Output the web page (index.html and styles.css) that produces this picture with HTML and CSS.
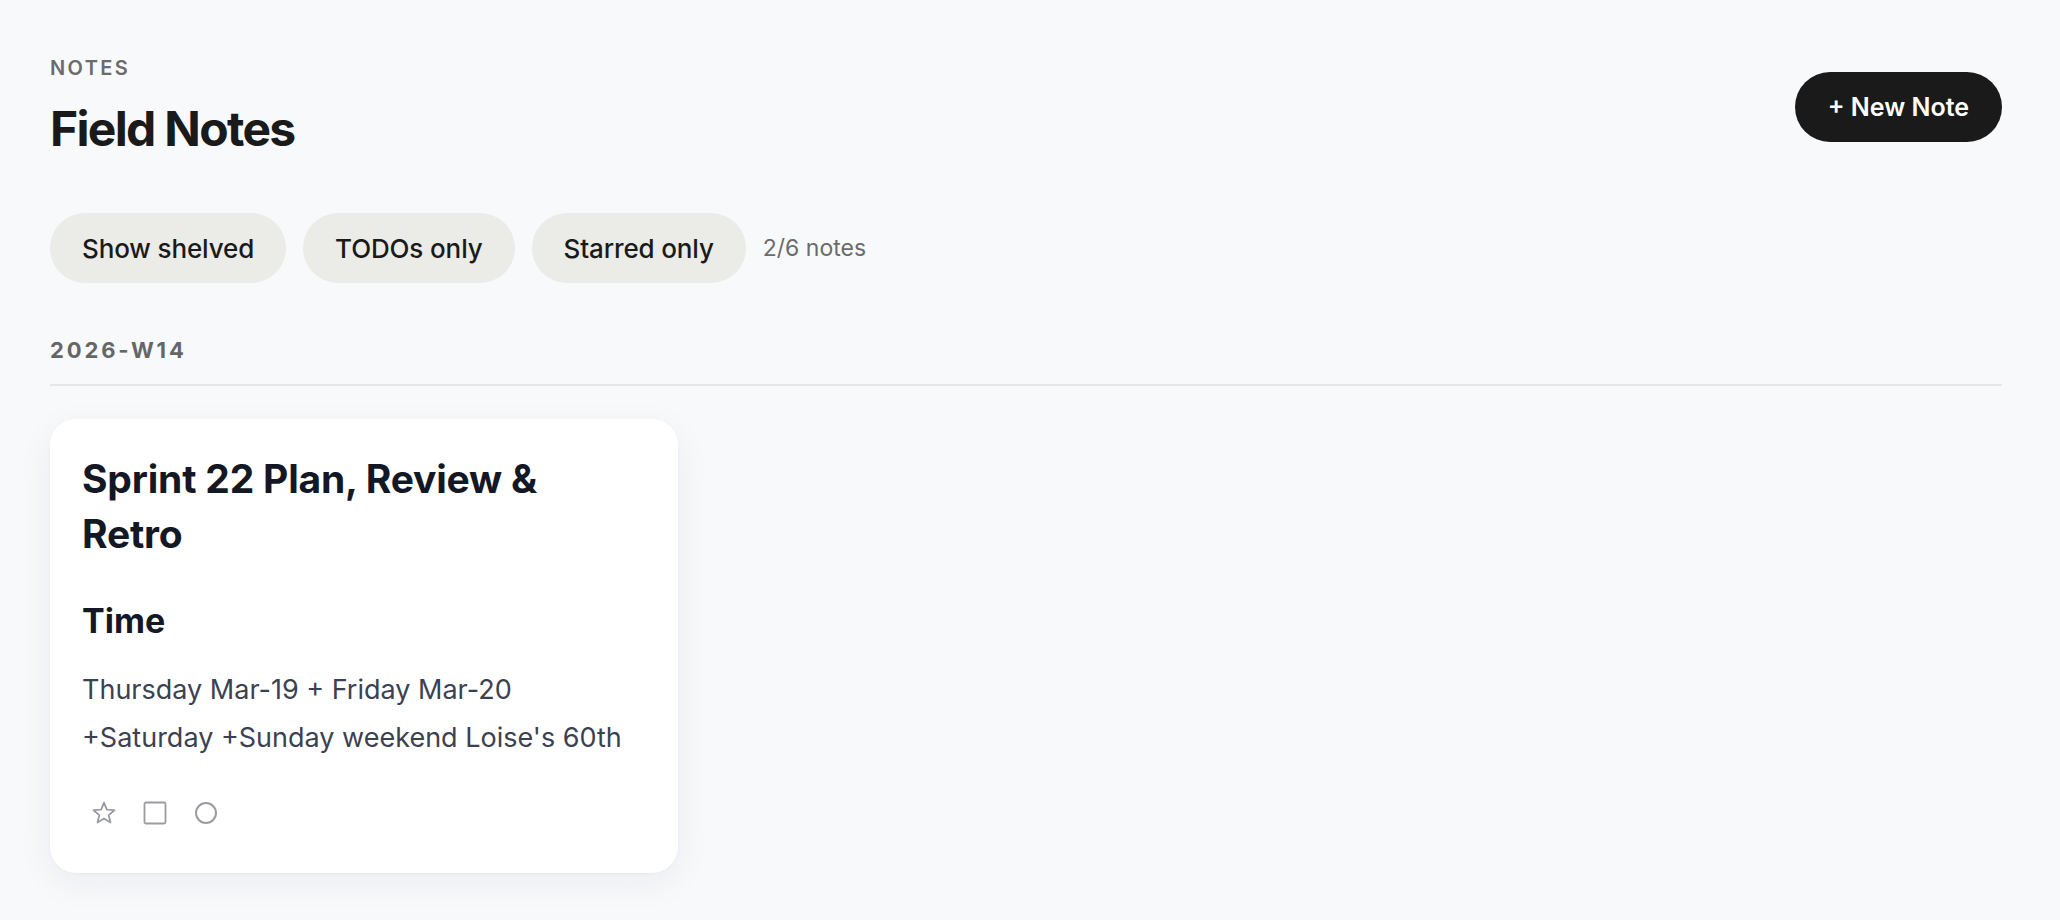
FILE: index.html
```html
<!DOCTYPE html>
<html lang="en">
<head>
<meta charset="utf-8">
<title>Field Notes</title>
<link rel="stylesheet" href="styles.css">
</head>
<body>
<main class="page">
  <header class="page-header">
    <div class="heading">
      <div class="eyebrow">NOTES</div>
      <h1 class="title">Field Notes</h1>
    </div>
    <button class="new-btn">+ New Note</button>
  </header>

  <div class="filters">
    <button class="pill">Show shelved</button>
    <button class="pill">TODOs only</button>
    <button class="pill">Starred only</button>
    <span class="count">2/6 notes</span>
  </div>

  <section class="week">
    <h2 class="week-label">2026-W14</h2>
    <div class="cards">
      <article class="card">
        <h3 class="card-title">Sprint 22 Plan, Review &amp; Retro</h3>
        <h4 class="card-sub">Time</h4>
        <p class="card-body">Thursday Mar-19 + Friday Mar-20<br>+Saturday +Sunday weekend Loise's 60th</p>
        <div class="card-actions">
          <span class="icon" aria-label="Star">
            <svg width="24" height="24" viewBox="0 0 24 24" fill="none" stroke="currentColor" stroke-width="1.8" stroke-linejoin="round"><path d="M12 1.6L14.88 8.64L22.46 9.2L16.66 14.11L18.47 21.5L12 17.5L5.53 21.5L7.34 14.11L1.54 9.2L9.12 8.64Z"/></svg>
          </span>
          <span class="icon" aria-label="Todo">
            <svg width="24" height="24" viewBox="0 0 24 24" fill="none" stroke="currentColor" stroke-width="1.8"><rect x="1.5" y="1.5" width="21" height="21" rx="1.5"/></svg>
          </span>
          <span class="icon" aria-label="Status">
            <svg width="24" height="24" viewBox="0 0 24 24" fill="none" stroke="currentColor" stroke-width="2"><circle cx="12" cy="12" r="10"/></svg>
          </span>
        </div>
      </article>
    </div>
  </section>
</main>
</body>
</html>
```

FILE: styles.css
```css
* { box-sizing: border-box; }

html, body {
  margin: 0;
  padding: 0;
  background: #f8f9fb;
  font-family: Inter, "Noto Sans", "Liberation Sans", sans-serif;
  color: #1a1a1a;
}

.page {
  padding: 56px 58px 40px 50px;
}

.page-header {
  display: flex;
  justify-content: space-between;
  align-items: center;
}

.eyebrow {
  font-size: 20px;
  line-height: 24px;
  font-weight: 600;
  letter-spacing: 0.12em;
  color: #6b6b6b;
}

.title {
  margin: 20px 0 0;
  font-size: 48px;
  line-height: 58px;
  font-weight: 700;
  letter-spacing: -0.035em;
  color: #1a1a1a;
}

.new-btn {
  height: 70px;
  padding: 0 33px;
  border: none;
  border-radius: 35px;
  background: #1a1a1a;
  color: #ffffff;
  font-family: inherit;
  font-size: 25px;
  font-weight: 600;
}

.filters {
  display: flex;
  align-items: center;
  gap: 17px;
  margin-top: 55px;
}

.pill {
  height: 70px;
  padding: 0 32px;
  border: none;
  border-radius: 35px;
  background: #ebebe7;
  color: #1a1a1a;
  font-family: inherit;
  font-size: 26px;
  font-weight: 500;
  letter-spacing: -0.005em;
}

.count {
  font-size: 23px;
  color: #6b6b6b;
}

.week {
  margin-top: 54px;
}

.week-label {
  margin: 0;
  padding-bottom: 21px;
  border-bottom: 2px solid #e6e6e6;
  font-size: 22px;
  line-height: 26px;
  font-weight: 700;
  letter-spacing: 0.13em;
  color: #666666;
}

.cards {
  display: flex;
  margin-top: 33px;
}

.card {
  width: 628px;
  padding: 32px 32px 42px;
  background: #ffffff;
  border-radius: 26px;
  box-shadow: 0 10px 36px rgba(20, 30, 50, 0.06), 0 1px 3px rgba(20, 30, 50, 0.03);
}

.card-title {
  margin: 0;
  max-width: 500px;
  font-size: 39px;
  line-height: 55px;
  font-weight: 700;
  letter-spacing: -0.005em;
  color: #141824;
}

.card-sub {
  margin: 38px 0 0;
  font-size: 34px;
  line-height: 44px;
  font-weight: 700;
  color: #141824;
}

.card-body {
  margin: 23px 0 0;
  font-size: 27px;
  line-height: 48px;
  color: #3c4150;
}

.card-actions {
  display: flex;
  align-items: center;
  gap: 27px;
  height: 36px;
  margin-top: 33px;
  padding-left: 10px;
}

.icon {
  display: inline-flex;
  width: 24px;
  height: 24px;
  color: #9a9ca2;
}
```
